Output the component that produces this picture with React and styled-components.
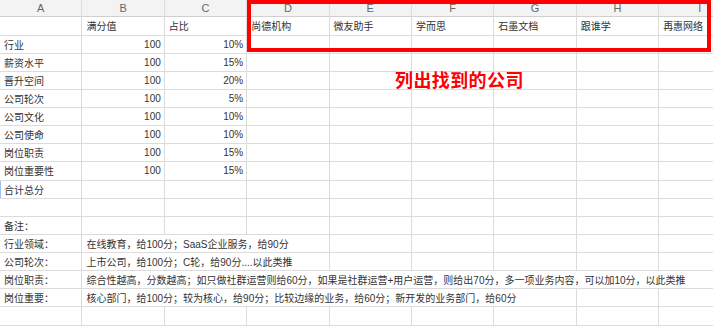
import React from "react";
import styled, { createGlobalStyle } from "styled-components";

const GlobalStyle = createGlobalStyle`
  body {
    margin: 0;
    background: #fff;
    font-family: "Liberation Sans", "Noto Sans CJK SC", Arial, sans-serif;
  }
`;

const Sheet = styled.div`
  position: relative;
  width: 713px;
  height: 326px;
  overflow: hidden;
  background: #fff;
`;

const Grid = styled.div`
  display: grid;
  grid-template-columns: repeat(9, 82.4px);
  grid-template-rows: 17.4px;
  grid-auto-rows: 18.125px;
`;

const HeadCell = styled.div`
  box-sizing: border-box;
  background: #f3f3f3;
  border-right: 1px solid #dcdcdc;
  border-bottom: 1px solid #d0d0d0;
  color: #666;
  font-size: 11px;
  display: flex;
  align-items: center;
  justify-content: center;
`;

const Cell = styled.div`
  box-sizing: border-box;
  grid-column: span ${(p) => p.$span || 1};
  border-right: 1px solid #dcdcdc;
  border-bottom: 1px solid #dcdcdc;
  box-shadow: ${(p) => (p.$active ? "inset 1px 0 0 #9dc3f2" : "none")};
  padding: 0 3px 0 4px;
  font-size: 10px;
  color: #333;
  white-space: nowrap;
  display: flex;
  align-items: center;
  justify-content: ${(p) => (p.$num ? "flex-end" : "flex-start")};
`;

// red hand-drawn markup over the company columns
const Frame = styled.div`
  position: absolute;
  left: 247px;
  top: 0;
  width: 464px;
  height: 52px;
  box-sizing: border-box;
  border: 4px solid #ff0000;
`;

const Note = styled.div`
  position: absolute;
  left: 395px;
  top: 67px;
  color: #ff0000;
  font-family: "Noto Sans CJK SC", sans-serif;
  font-weight: 700;
  font-size: 18px;
  letter-spacing: 0.4px;
  line-height: 24px;
`;

const cols = ["A", "B", "C", "D", "E", "F", "G", "H", "I"];
const companies = ["尚德机构", "微友助手", "学而思", "石墨文档", "跟谁学", "再惠网络"];

const scores = [
  ["行业", "10%"],
  ["薪资水平", "15%"],
  ["晋升空间", "20%"],
  ["公司轮次", "5%"],
  ["公司文化", "10%"],
  ["公司使命", "10%"],
  ["岗位职责", "15%"],
  ["岗位重要性", "15%"],
];

const notes = [
  ["行业领域：", "在线教育，给100分；SaaS企业服务，给90分", 3],
  ["公司轮次：", "上市公司，给100分；C轮，给90分....以此类推", 3],
  [
    "岗位职责：",
    "综合性越高，分数越高；如只做社群运营则给60分，如果是社群运营+用户运营，则给出70分，多一项业务内容，可以加10分，以此类推",
    8,
  ],
  ["岗位重要：", "核心部门，给100分；较为核心，给90分；比较边缘的业务，给60分；新开发的业务部门，给60分", 6],
];

const blanks = (n, key) =>
  Array.from({ length: n }, (_, i) => <Cell key={key + i} />);

export default function App() {
  return (
    <Sheet>
      <GlobalStyle />
      <Grid>
        {cols.map((c) => (
          <HeadCell key={c}>{c}</HeadCell>
        ))}

        <Cell />
        <Cell>满分值</Cell>
        <Cell>占比</Cell>
        {companies.map((c) => (
          <Cell key={c}>{c}</Cell>
        ))}

        {scores.map(([name, pct]) => (
          <React.Fragment key={name}>
            <Cell>{name}</Cell>
            <Cell $num>100</Cell>
            <Cell $num>{pct}</Cell>
            {blanks(6, name)}
          </React.Fragment>
        ))}

        <Cell $active>合计总分</Cell>
        {blanks(8, "sum")}

        {blanks(9, "gap")}

        <Cell>备注：</Cell>
        {blanks(8, "memo")}

        {notes.map(([label, text, span]) => (
          <React.Fragment key={label + span}>
            <Cell>{label}</Cell>
            <Cell $span={span}>{text}</Cell>
            {blanks(8 - span, label)}
          </React.Fragment>
        ))}

        {blanks(9, "end")}
      </Grid>
      <Frame />
      <Note>列出找到的公司</Note>
    </Sheet>
  );
}
